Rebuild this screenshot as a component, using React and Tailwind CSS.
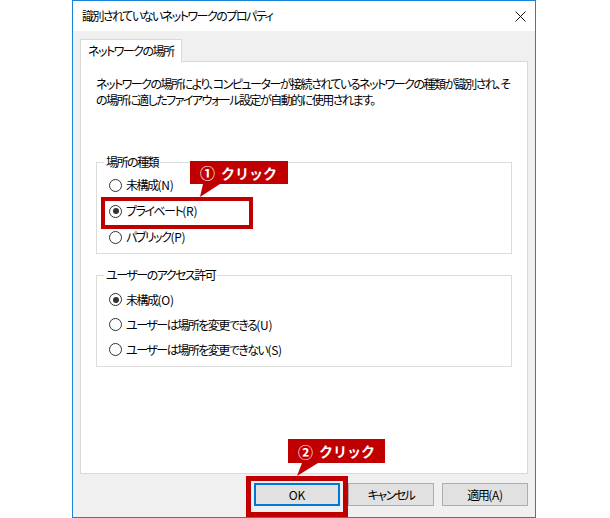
import React from "react";

const font = "font-['Noto_Sans_CJK_JP','Noto_Sans',sans-serif] [font-feature-settings:'palt'] tracking-[-1.5px]";

// access key part like "(N)" keeps normal spacing
const Key = ({ k }) => <span className="tracking-[-0.3px]">({k})</span>;

const Radio = ({ checked, label, k, h = "h-[26px]" }) => (
  <label className={`flex items-center gap-[4px] ${h}`}>
    <span className="flex h-[13px] w-[13px] items-center justify-center rounded-full border border-[#333333] bg-white">
      {checked && <span className="h-[6px] w-[6px] rounded-full bg-[#333333]" />}
    </span>
    <span className="text-[12px] leading-[16px] text-black">
      {label}
      <Key k={k} />
    </span>
  </label>
);

const Group = ({ title, children, className = "" }) => (
  <fieldset className={`border border-[#dcdcdc] ${className}`}>
    <legend className="ml-[7px] px-[2px] text-[12px] leading-[16px] text-black">{title}</legend>
    <div className="pl-[12px]">{children}</div>
  </fieldset>
);

const Button = ({ children, focused }) => (
  <button
    className={`flex h-[23px] w-[86px] items-center justify-center bg-[#e1e1e1] text-[12px] text-black ${
      focused ? "border-2 border-[#0078d7]" : "border border-[#adadad]"
    }`}
  >
    {children}
  </button>
);

// red callout: label with a little pointer under it
const Callout = ({ num, className, tri }) => (
  <div className={`absolute ${className}`}>
    <div className="flex h-full items-center gap-[6px] bg-[#c00000] pl-[10px] font-bold leading-none tracking-normal text-white [font-feature-settings:normal]">
      <span className="text-[15px]">{num}</span>
      <span className="text-[14px]">クリック</span>
    </div>
    <svg className="absolute left-0 top-full overflow-visible" width="1" height="1">
      <polygon points={tri} fill="#c00000" />
    </svg>
  </div>
);

export default function App() {
  return (
    <div className={`relative h-[518px] w-[610px] bg-white ${font}`}>
      <div className="ml-[72px] flex h-[518px] w-[464px] flex-col border border-[#1883d7] bg-[#f0f0f0]">
        {/* title bar */}
        <div className="flex h-[30px] items-center justify-between bg-white pl-[9px] pr-[8px]">
          <span className="text-[12px] text-black">識別されていないネットワークのプロパティ</span>
          <svg width="11" height="11" viewBox="0 0 11 11" className="mr-[1px]">
            <path d="M0.5 0.5 L10.5 10.5 M10.5 0.5 L0.5 10.5" stroke="#111" strokeWidth="1" />
          </svg>
        </div>

        <div className="flex flex-1 flex-col px-[7px] pt-[8px]">
          {/* tab strip */}
          <div className="flex">
            <div className="relative z-10 -mb-px flex h-[23px] w-[102px] items-center whitespace-nowrap border border-b-0 border-[#d9d9d9] bg-white pl-[7px] text-[12px] text-black">
              ネットワークの場所
            </div>
          </div>

          {/* tab page */}
          <div className="flex h-[413px] flex-col border border-[#d9d9d9] bg-white px-[15px] pt-[14px]">
            <p className="whitespace-nowrap text-[12px] leading-[16px] text-black">
              ネットワークの場所により、コンピューターが接続されているネットワークの種類が識別され、そ
              <br />
              の場所に適したファイアウォール設定が自動的に使用されます。
            </p>

            <Group title="場所の種類" className="mt-[46px] pb-[3px] pt-[2px]">
              <Radio label="未構成" k="N" />
              <Radio checked label="プライベート" k="R" />
              <Radio label="パブリック" k="P" />
            </Group>

            <Group title="ユーザーのアクセス許可" className="mt-[13px] pb-[4px] pt-[4px]">
              <Radio checked label="未構成" k="O" h="h-[25px]" />
              <Radio label="ユーザーは場所を変更できる" k="U" h="h-[25px]" />
              <Radio label="ユーザーは場所を変更できない" k="S" h="h-[25px]" />
            </Group>
          </div>

          <div className="mt-[9px] flex justify-end gap-[8px]">
            <Button focused>
              <span className="tracking-normal">OK</span>
            </Button>
            <Button>キャンセル</Button>
            <Button>
              適用<Key k="A" />
            </Button>
          </div>
        </div>
      </div>

      {/* annotations */}
      <div className="absolute left-[101px] top-[197px] h-[32px] w-[152px] border-4 border-[#c00000]" />
      <Callout num="①" className="left-[190px] top-[161px] h-[23px] w-[98px]" tri="13,0 30,0 10,13" />

      <div className="absolute left-[246px] top-[476px] h-[41px] w-[102px] border-[5px] border-[#c00000]" />
      <Callout num="②" className="left-[288px] top-[439px] h-[24px] w-[97px]" tri="14,0 30,0 9,13" />
    </div>
  );
}
